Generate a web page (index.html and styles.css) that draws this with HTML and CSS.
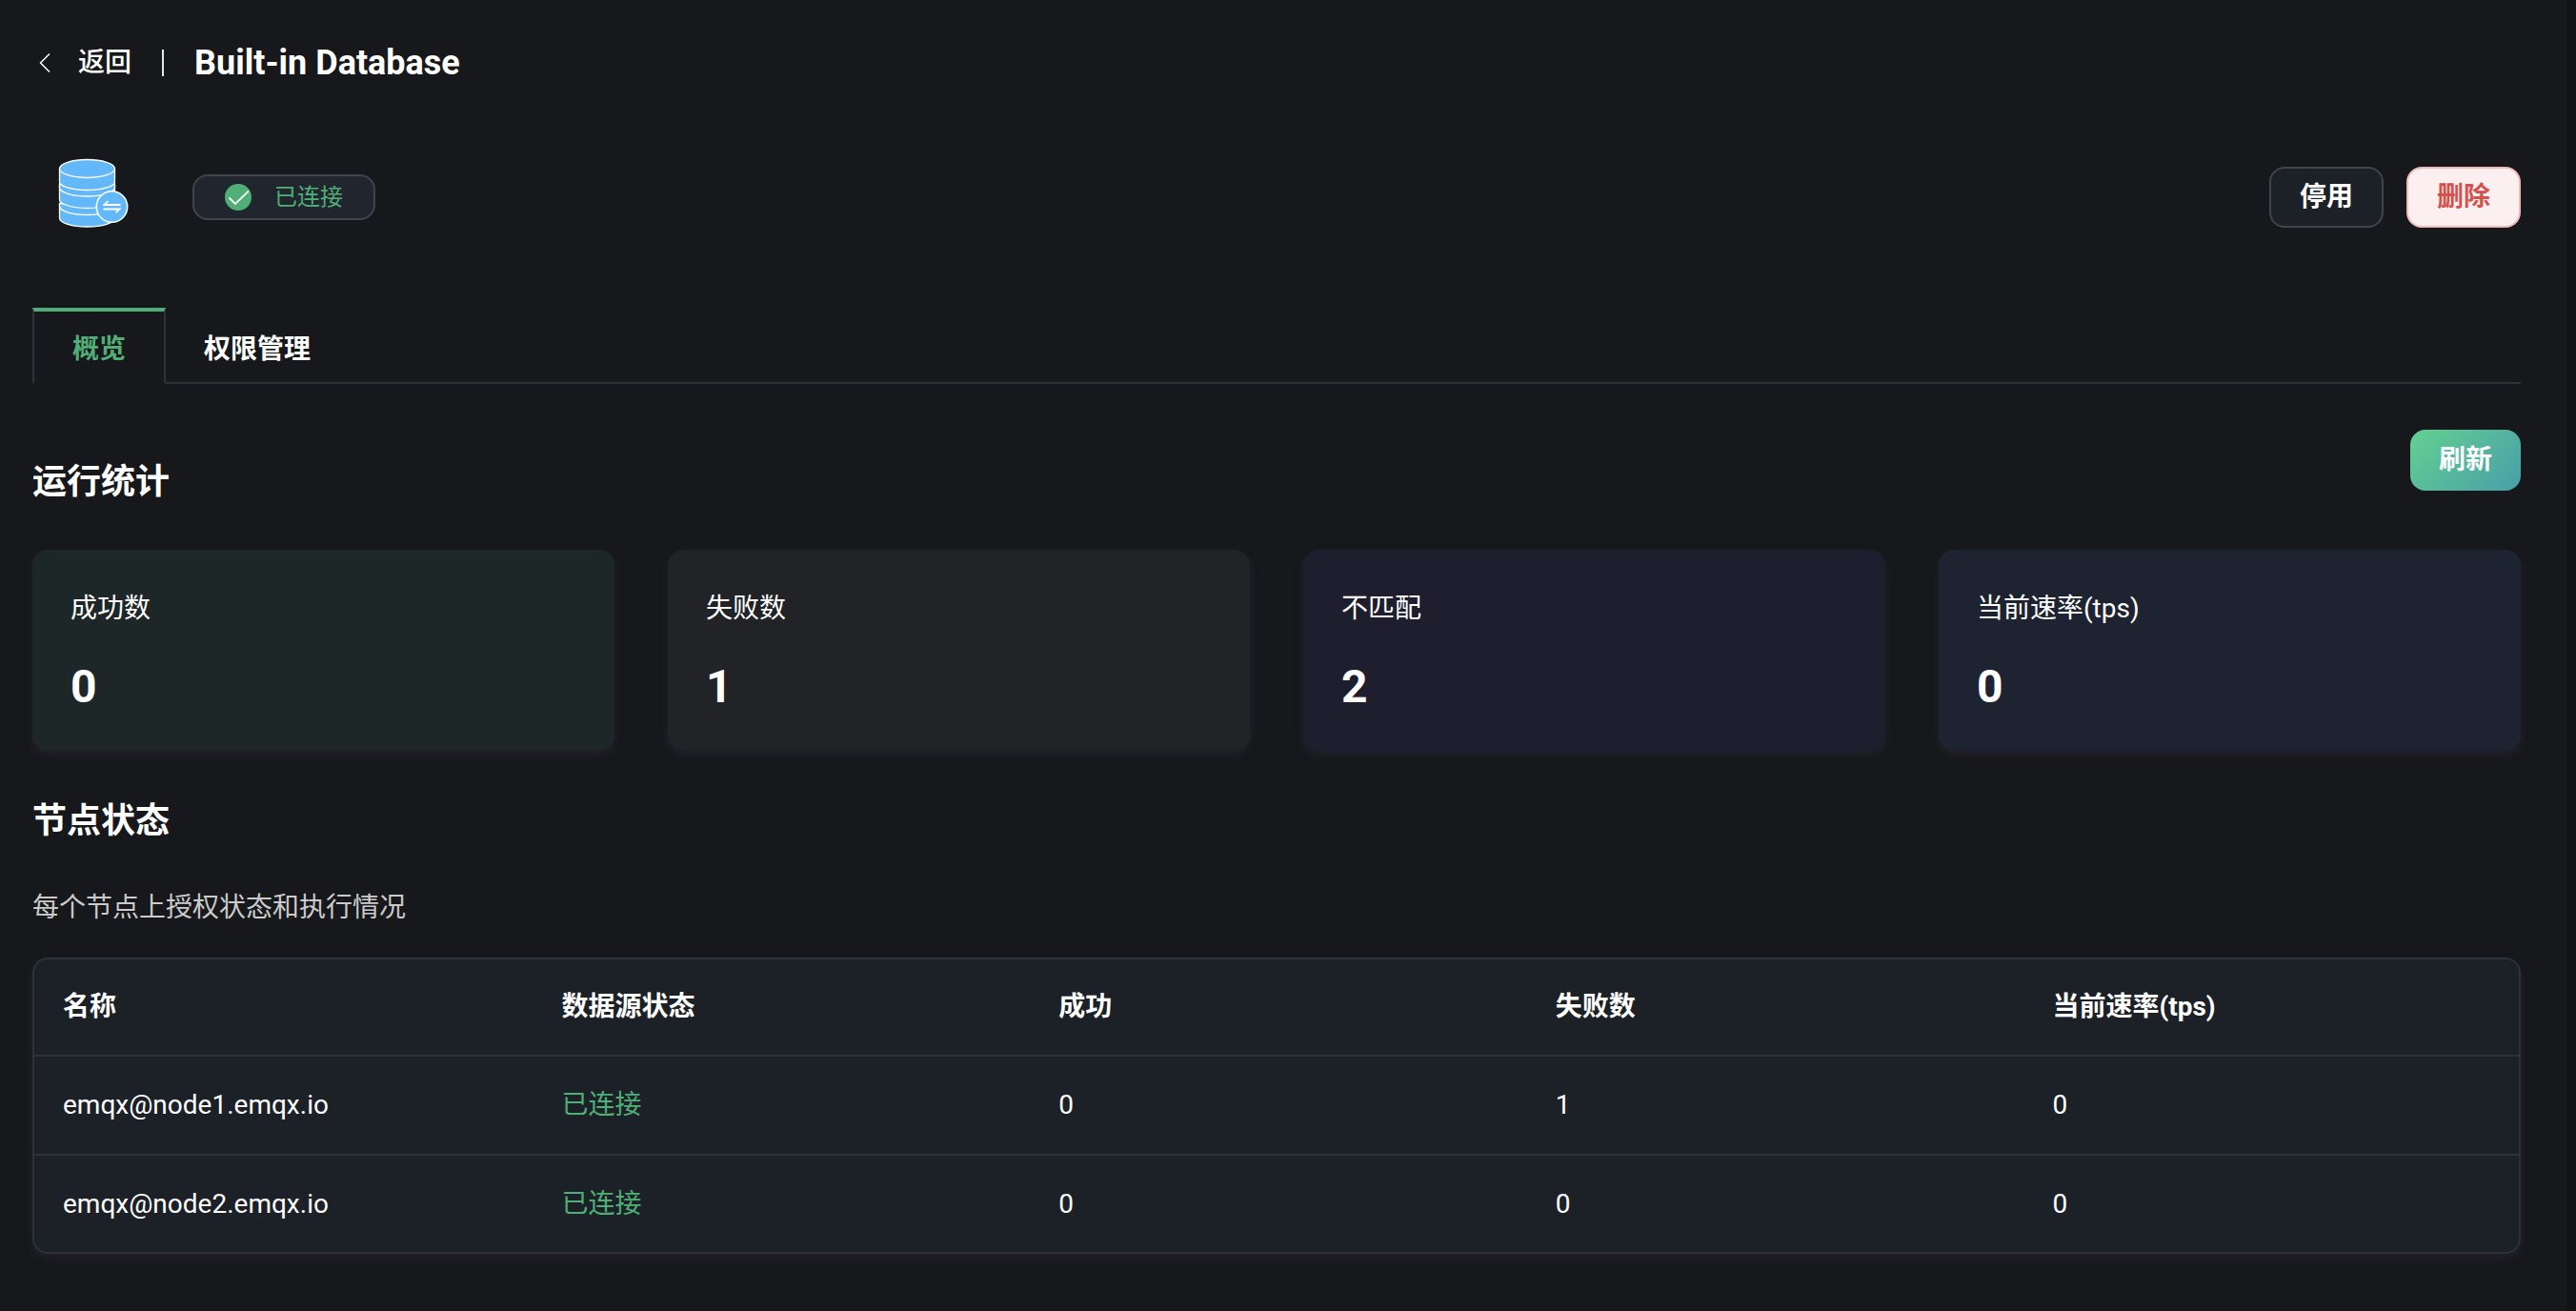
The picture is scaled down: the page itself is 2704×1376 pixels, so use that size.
FILE: index.html
```html
<!DOCTYPE html>
<html lang="zh-CN">
<head>
<meta charset="utf-8">
<meta name="viewport" content="width=device-width, initial-scale=1">
<title>Built-in Database</title>
<link rel="stylesheet" href="styles.css">
</head>
<body>
<main class="page">
  <header class="topbar">
    <a class="back" href="#">
      <svg class="back-icon" viewBox="0 0 14 22" aria-hidden="true"><path d="M12 1.500L2.500 11L12 20.500"/></svg>
      <span>返回</span>
    </a>
    <span class="divider"></span>
    <h1 class="title">Built-in Database</h1>
  </header>

  <section class="summary">
    <svg class="db-icon" viewBox="0 0 76 76" aria-hidden="true">
      <g fill="#62b8f9" stroke="#fff" stroke-width="1.300">
        <path d="M3.500 51v14c0 5 13 9 29 9s29-4 29-9V51z"/>
        <path d="M3.500 49.500v2.500c0 5.500 13 9.500 29 9.500s29-4 29-9.500v-2.500z"/>
        <path d="M3.500 31v15c0 4 13 8.500 29 8.500s29-4.500 29-8.500V31z"/>
        <path d="M3.500 29v3.500c0 5.500 13 9.500 29 9.500s29-4 29-9.500V29z"/>
        <path d="M3.500 13v14c0 4.500 13 8.500 29 8.500s29-4 29-8.500V13z"/>
        <ellipse cx="32.500" cy="13" rx="29" ry="9.500"/>
        <circle cx="58.500" cy="53" r="16.200" stroke-width="1.600"/>
      </g>
      <path d="M67.500 51H50.500l3.800-3.800M49.500 55.500h17l-3.800 3.500" fill="none" stroke="#fff" stroke-width="1.800"/>
    </svg>
    <span class="badge">
      <svg class="badge-icon" viewBox="0 0 28 28" aria-hidden="true"><circle cx="14" cy="14" r="14" fill="#50ae77"/><path d="M4.500 14.500l6.500 6.500L25 7.500" fill="none" stroke="#fff" stroke-width="1.800"/></svg>
      已连接
    </span>
    <div class="actions">
      <button class="btn btn-plain" type="button">停用</button>
      <button class="btn btn-danger" type="button">删除</button>
    </div>
  </section>

  <div class="tabs" role="tablist">
    <button class="tab tab-active" type="button" role="tab" aria-selected="true">概览</button>
    <button class="tab" type="button" role="tab" aria-selected="false">权限管理</button>
  </div>

  <div class="section-head">
    <h2 class="heading">运行统计</h2>
    <button class="btn btn-primary" type="button">刷新</button>
  </div>

  <section class="cards">
    <div class="card card-green"><div class="label">成功数</div><div class="value">0</div></div>
    <div class="card card-gray"><div class="label">失败数</div><div class="value">1</div></div>
    <div class="card card-purple"><div class="label">不匹配</div><div class="value">2</div></div>
    <div class="card card-blue"><div class="label">当前速率(tps)</div><div class="value">0</div></div>
  </section>

  <h2 class="heading heading-nodes">节点状态</h2>
  <p class="description">每个节点上授权状态和执行情况</p>

  <div class="table-box">
    <table class="table">
      <thead>
        <tr><th>名称</th><th>数据源状态</th><th>成功</th><th>失败数</th><th>当前速率(tps)</th></tr>
      </thead>
      <tbody>
        <tr><td>emqx@node1.emqx.io</td><td class="ok">已连接</td><td>0</td><td>1</td><td>0</td></tr>
        <tr><td>emqx@node2.emqx.io</td><td class="ok">已连接</td><td>0</td><td>0</td><td>0</td></tr>
      </tbody>
    </table>
  </div>
</main>
</body>
</html>
```
FILE: styles.css
```css
* {
  box-sizing: border-box;
}

body {
  margin: 0;
  min-height: 100vh;
  border-right: 10px solid #131416;
  background: #17181b;
  color: #fff;
  font-family: Roboto, "Noto Sans CJK SC", sans-serif;
  font-size: 28px;
  line-height: 40px;
}

button {
  font: inherit;
  cursor: pointer;
}

.page {
  padding: 40px 48px 48px 34px;
}

.topbar {
  display: flex;
  align-items: center;
  height: 52px;
}

.back {
  display: flex;
  align-items: center;
  gap: 28px;
  padding-left: 6px;
  color: #fff;
  font-weight: 500;
  text-decoration: none;
}

.back-icon {
  width: 14px;
  height: 22px;
  fill: none;
  stroke: #fff;
  stroke-width: 1.5;
}

.divider {
  width: 2px;
  height: 28px;
  margin: 0 32px;
  background: #e8e8e8;
}

.title {
  margin: 0;
  font-size: 36px;
  font-weight: 700;
}

.summary {
  display: flex;
  align-items: center;
  height: 80px;
  margin-top: 75px;
  padding-left: 25px;
}

.db-icon {
  width: 76px;
  height: 76px;
  margin-bottom: 10px;
}

.badge {
  display: flex;
  align-items: center;
  gap: 24px;
  height: 48px;
  margin-left: 67px;
  padding: 0 32px;
  border: 2px solid #41444a;
  border-radius: 16px;
  background: #21252d;
  color: #50ae77;
  font-size: 24px;
}

.badge-icon {
  width: 28px;
  height: 28px;
}

.actions {
  display: flex;
  gap: 24px;
  margin-left: auto;
}

.btn {
  height: 64px;
  padding: 0 30px;
  border: 0;
  border-radius: 16px;
  color: #fff;
  font-weight: 700;
}

.btn-plain {
  border: 2px solid #41444a;
  background: #1c2027;
}

.btn-danger {
  border: 2px solid #f3b7b7;
  background: #fcefef;
  color: #d4504c;
}

.btn-primary {
  background: linear-gradient(135deg, #63d091, #489fa9);
}

.tabs {
  display: flex;
  height: 80px;
  margin-top: 76px;
  box-shadow: inset 0 -2px #2d3239;
}

.tab {
  padding: 8px 40px 0;
  border: 0;
  background: none;
  color: #fff;
  font-weight: 700;
}

.tab-active {
  padding-top: 6px;
  border: 2px solid #2d3239;
  border-top: 4px solid #50ae77;
  border-bottom-color: #17181b;
  background: #17181b;
  color: #50ae77;
}

.section-head {
  display: flex;
  align-items: flex-start;
  justify-content: space-between;
  margin-top: 48px;
}

.heading {
  margin: 29px 0 0;
  font-size: 36px;
  font-weight: 700;
  line-height: 52px;
}

.cards {
  display: grid;
  grid-template-columns: repeat(4, 1fr);
  gap: 56px;
  margin-top: 45px;
}

.card {
  height: 211px;
  padding: 42px 40px 40px;
  border-radius: 16px;
  box-shadow: 0 4px 10px rgba(58, 53, 80, 0.3);
}

.card-green {
  background: #1e2728;
}

.card-gray {
  background: #222326;
}

.card-purple {
  background: #1e1e2f;
}

.card-blue {
  background: #1e2331;
}

.value {
  margin-top: 34px;
  font-size: 48px;
  font-weight: 700;
  line-height: 56px;
}

.heading-nodes {
  margin-top: 48px;
}

.description {
  margin: 45px 0 32px;
  color: #cbcbcc;
}

.table-box {
  overflow: hidden;
  border: 2px solid #2d3239;
  border-radius: 16px;
  background: #1c2027;
  box-shadow: 0 4px 10px rgba(58, 53, 80, 0.3);
}

.table {
  width: 100%;
  border-collapse: separate;
  border-spacing: 0;
  table-layout: fixed;
}

.table th,
.table td {
  height: 104px;
  padding: 0 32px;
  border-bottom: 2px solid #2d3239;
  text-align: left;
}

.table th {
  height: 102px;
  font-weight: 700;
}

.table th:first-child,
.table td:first-child {
  padding-left: 30px;
}

.table tr:last-child td {
  height: 101px;
  border-bottom: 0;
}

.table .ok {
  color: #50ae77;
}
```
